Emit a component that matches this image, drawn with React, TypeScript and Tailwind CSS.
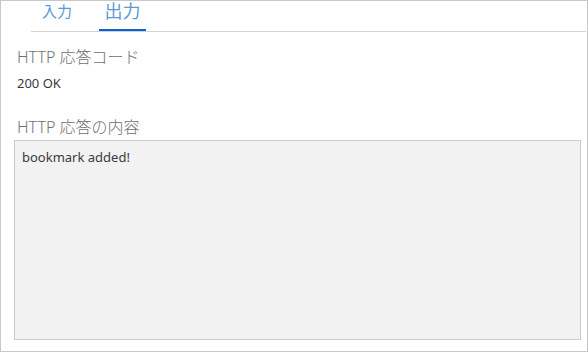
import React from "react";

export default function App() {
  const font = { fontFamily: '"Segoe UI", "Noto Sans", "Noto Sans CJK JP", sans-serif' };
  return (
    <div className="w-[588px] h-[352px] border border-[#c8c8c8] bg-white flex flex-col overflow-hidden" style={font}>
      <div className="ml-[30px] mr-[1px] h-[31px] border-b border-[#d2d2d2] flex items-end shrink-0">
        <div className="h-[30px] px-[11px] flex items-start pt-[1px] text-[15px] leading-[18px] text-[#5b9bd5]">入力</div>
        <div className="ml-[16px] h-[30px] w-[47px] border-b-2 border-[#0a62d6] flex items-start justify-center pt-0 text-[18px] leading-[20px] text-[#5b9bd5]">出力</div>
      </div>
      <div className="pl-[16px] pt-[15px] text-[16px] leading-[20px] font-light text-[#707070]">HTTP 応答コード</div>
      <div className="pl-[16px] pt-[8px] text-[13px] leading-[16px] text-[#3a3a3a]">200 OK</div>
      <div className="pl-[16px] pt-[26px] text-[16px] leading-[20px] font-light text-[#707070]">HTTP 応答の内容</div>
      <div className="ml-[13px] mr-[6px] mt-[3px] h-[200px] border border-[#cccccc] bg-[#f2f2f2] px-[7px] pt-[8px] text-[13px] leading-[16px] text-[#3a3a3a]">
        bookmark added!
      </div>
    </div>
  );
}
